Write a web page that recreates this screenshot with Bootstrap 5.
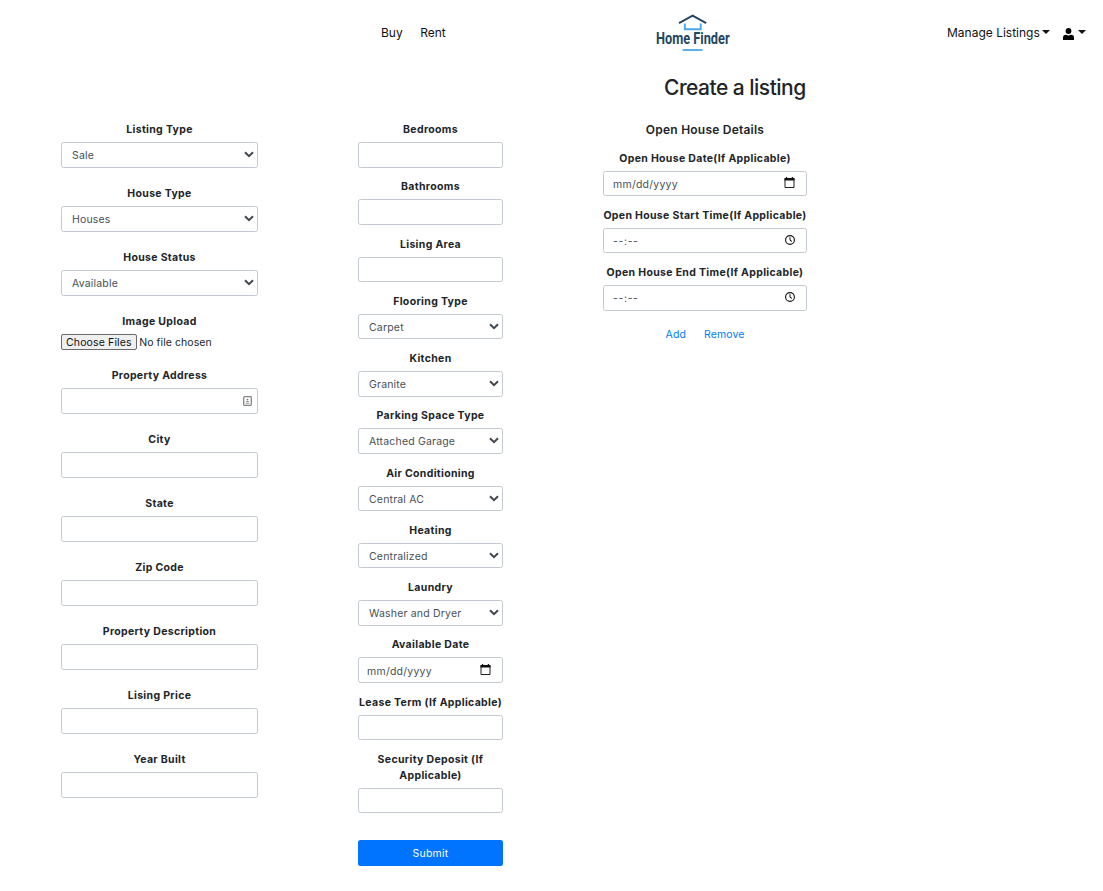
<!DOCTYPE html>
<html lang="en">
<head>
<meta charset="utf-8">
<meta name="viewport" content="width=device-width, initial-scale=1">
<title>Home Finder - Create a listing</title>
<link href="https://cdn.jsdelivr.net/npm/bootstrap@5.3.0/dist/css/bootstrap.min.css" rel="stylesheet">
<style>
body{font-family:Inter,"Liberation Sans",sans-serif;font-size:10.5px;line-height:16px;letter-spacing:.3px;color:#212529;background:#fff;overflow:hidden}
.topbar{height:66px;font-size:12px;letter-spacing:0;color:#111}
.topbar a{color:#111;text-decoration:none;white-space:nowrap}
.topbar .left{margin-left:381px;width:273px;gap:17.5px}
.topbar .right{margin-left:215px;gap:13px}
.topbar .dropdown-toggle::after{border-top-width:4px;border-left-width:4px;border-right-width:4px;margin-left:2px;vertical-align:3.5px}
.topbar .account::after{margin-left:4px}
.page-title{font-size:21px;line-height:26px;letter-spacing:-.52px;font-weight:500;margin:9px 0 0 664px}
.cols{padding:20px 0 0 61px}
.c1{width:197px;margin-right:100px}
.c2{width:145px;margin-right:100px}
.c3{width:204px}
.form-label{display:block;text-align:center;font-weight:700;letter-spacing:.33px;padding-top:1px;margin:0 -4px 4.1px;line-height:16px;white-space:nowrap}
.c1 .field{margin-bottom:17.4px}
.c2 .field,.c3 .field{margin-bottom:10.67px}
.form-control,.form-select{height:25.5px;min-height:0;font-size:10.5px;letter-spacing:.18px;line-height:16px;color:#495057;border:1px solid #c3cad1;border-radius:2.5px;padding:5px 10px 3px}
.form-select{background-image:url("data:image/svg+xml,%3Csvg xmlns='http://www.w3.org/2000/svg' viewBox='0 0 10 7'%3E%3Cpath d='M1 1.2 5 5.2 9 1.2' fill='none' stroke='%23404850' stroke-width='2'/%3E%3C/svg%3E");background-size:10px 7px;background-position:right 3px top 8px}
.picker{display:flex;align-items:center;justify-content:space-between;padding:3px 11px 0 9px;letter-spacing:.25px}
.c2 .picker{padding-left:8px}
.picker svg{margin-top:-4px}
.picker.contact{padding-right:5px}
.picker.contact svg{margin-top:-3px}
.time{letter-spacing:.65px}
.filebtn{border:1px solid #6b6b6b;border-radius:2px;background:#efefef;color:#111;padding:0 4px;height:16px;line-height:15px;font-size:10.5px;letter-spacing:.14px}
.file{gap:2.5px;height:16px;letter-spacing:.07px}
.file span{padding-top:1px}
.c1 .field:nth-child(4){margin-bottom:17px}
.sub-title{font-size:12px;line-height:17px;font-weight:600;letter-spacing:.22px;text-align:center;margin:0 0 11.6px}
.links{gap:18px;margin-top:16.4px;letter-spacing:.1px}
.links a{color:#007bff;text-decoration:none}
.btn-submit{background:#0073ff;color:#fff;height:26px;border-radius:2.5px;border:0;padding:2px 0 0;font-size:10.5px;letter-spacing:.25px;margin-top:15.5px}
</style>
</head>
<body>
<nav class="topbar d-flex align-items-center">
  <div class="left d-flex"><a href="#">Buy</a><a href="#">Rent</a></div>
  <svg width="78" height="40" viewBox="654 13 78 40" overflow="visible" aria-label="Home Finder">
    <path d="M679 23.2 692.6 15.6 706.2 23.2" fill="none" stroke="#24475f" stroke-width="1.9"/>
    <path d="M684.8 23.5V29.3H700.7V23.5" fill="none" stroke="#4aa8ee" stroke-width="1.9"/>
    <text x="656" y="44.2" font-family="Roboto" font-weight="700" font-size="15.6" letter-spacing="0" textLength="73.6" lengthAdjust="spacingAndGlyphs" fill="#24475f">Home Finder</text>
    <path d="M682.6 50H702.6" stroke="#4aa8ee" stroke-width="1.8"/>
  </svg>
  <div class="right d-flex">
    <a href="#" class="dropdown-toggle">Manage Listings</a>
    <a href="#" class="dropdown-toggle account"><svg width="11" height="12" viewBox="0 0 11 12"><circle cx="5.5" cy="3" r="2.9"/><path d="M0 12V9.8Q0 7 3 6.8Q5.5 8 8 6.8Q11 7 11 9.8V12Z"/></svg></a>
  </div>
</nav>
<h1 class="page-title">Create a listing</h1>
<main class="cols d-flex align-items-start">
  <section class="c1">
    <div class="field"><label class="form-label">Listing Type</label><select class="form-select"><option>Sale</option></select></div>
    <div class="field"><label class="form-label">House Type</label><select class="form-select"><option>Houses</option></select></div>
    <div class="field"><label class="form-label">House Status</label><select class="form-select"><option>Available</option></select></div>
    <div class="field"><label class="form-label">Image Upload</label><div class="d-flex align-items-center file"><button class="filebtn">Choose Files</button><span>No file chosen</span></div></div>
    <div class="field"><label class="form-label">Property Address</label><div class="form-control picker contact"><span></span><svg width="9" height="10" viewBox="0 0 9 10" fill="none" stroke="#858585"><rect x=".7" y=".7" width="7.6" height="8.6" rx=".8" stroke-width="1.3"/><circle cx="4.5" cy="3.6" r=".9" fill="#777" stroke="none"/><path d="M3.2 5.5H5.8M2.6 7.2H6.4" stroke-width=".9"/></svg></div></div>
    <div class="field"><label class="form-label">City</label><input class="form-control"></div>
    <div class="field"><label class="form-label">State</label><input class="form-control"></div>
    <div class="field"><label class="form-label">Zip Code</label><input class="form-control"></div>
    <div class="field"><label class="form-label">Property Description</label><input class="form-control"></div>
    <div class="field"><label class="form-label">Lising Price</label><input class="form-control"></div>
    <div class="field"><label class="form-label">Year Built</label><input class="form-control"></div>
  </section>
  <section class="c2">
    <div class="field"><label class="form-label">Bedrooms</label><input class="form-control"></div>
    <div class="field"><label class="form-label">Bathrooms</label><input class="form-control"></div>
    <div class="field"><label class="form-label">Lising Area</label><input class="form-control"></div>
    <div class="field"><label class="form-label">Flooring Type</label><select class="form-select"><option>Carpet</option></select></div>
    <div class="field"><label class="form-label">Kitchen</label><select class="form-select"><option>Granite</option></select></div>
    <div class="field"><label class="form-label">Parking Space Type</label><select class="form-select"><option>Attached Garage</option></select></div>
    <div class="field"><label class="form-label">Air Conditioning</label><select class="form-select"><option>Central AC</option></select></div>
    <div class="field"><label class="form-label">Heating</label><select class="form-select"><option>Centralized</option></select></div>
    <div class="field"><label class="form-label">Laundry</label><select class="form-select"><option>Washer and Dryer</option></select></div>
    <div class="field"><label class="form-label">Available Date</label><div class="form-control picker"><span>mm/dd/yyyy</span><svg width="11" height="11" viewBox="0 0 11 11"><path d="M1 1.5H10V10.5H1Z" fill="none" stroke="#222"/><path d="M.5 1H10.5V3.4H.5ZM2 0H3.2V2H2ZM7.8 0H9V2H7.8Z" fill="#111"/></svg></div></div>
    <div class="field"><label class="form-label">Lease Term (If Applicable)</label><input class="form-control"></div>
    <div class="field"><label class="form-label">Security Deposit (If<br>Applicable)</label><input class="form-control"></div>
    <button class="btn btn-primary btn-submit w-100">Submit</button>
  </section>
  <section class="c3">
    <h2 class="sub-title">Open House Details</h2>
    <div class="field"><label class="form-label">Open House Date(If Applicable)</label><div class="form-control picker"><span>mm/dd/yyyy</span><svg width="11" height="11" viewBox="0 0 11 11"><path d="M1 1.5H10V10.5H1Z" fill="none" stroke="#222"/><path d="M.5 1H10.5V3.4H.5ZM2 0H3.2V2H2ZM7.8 0H9V2H7.8Z" fill="#111"/></svg></div></div>
    <div class="field"><label class="form-label">Open House Start Time(If Applicable)</label><div class="form-control picker"><span class="time">--:--</span><svg width="10" height="10" viewBox="0 0 10 10" fill="none" stroke="#111"><circle cx="5" cy="5" r="4.4" stroke-width="1.1"/><path d="M5 2.2V5.2L7 6.4"/></svg></div></div>
    <div class="field"><label class="form-label">Open House End Time(If Applicable)</label><div class="form-control picker"><span class="time">--:--</span><svg width="10" height="10" viewBox="0 0 10 10" fill="none" stroke="#111"><circle cx="5" cy="5" r="4.4" stroke-width="1.1"/><path d="M5 2.2V5.2L7 6.4"/></svg></div></div>
    <div class="links d-flex justify-content-center"><a href="#">Add</a><a href="#">Remove</a></div>
  </section>
</main>
<script src="https://cdn.jsdelivr.net/npm/bootstrap@5.3.0/dist/js/bootstrap.bundle.min.js"></script>
</body>
</html>
